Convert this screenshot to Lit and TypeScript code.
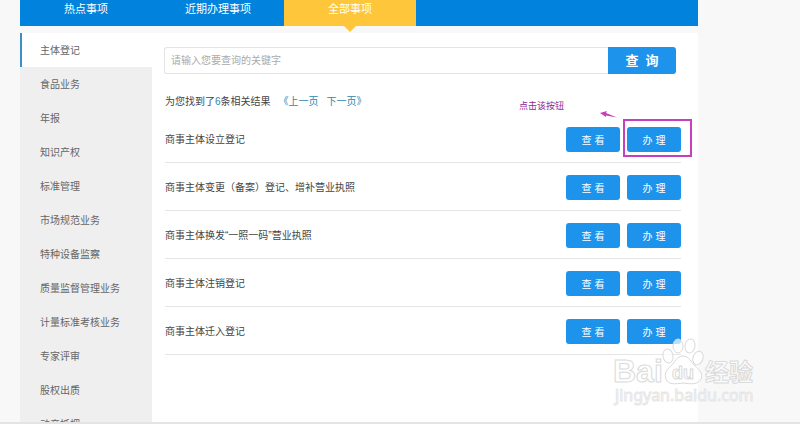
import { LitElement, html, css } from "lit";
import { customElement, state } from "lit/decorators.js";
import { classMap } from "lit/directives/class-map.js";

const TABS = ["热点事项", "近期办理事项", "全部事项"];
const CATEGORIES = [
  "主体登记", "食品业务", "年报", "知识产权", "标准管理", "市场规范业务",
  "特种设备监察", "质量监督管理业务", "计量标准考核业务", "专家评审", "股权出质", "动产抵押",
];
const RESULTS = [
  "商事主体设立登记",
  "商事主体变更（备案）登记、增补营业执照",
  "商事主体换发“一照一码”营业执照",
  "商事主体注销登记",
  "商事主体迁入登记",
];

@customElement("app-root")
export class AppRoot extends LitElement {
  @state() private tab = 2;
  @state() private category = 0;

  static styles = css`
    :host {
      display: flex;
      flex-direction: column;
      position: relative;
      height: 100vh;
      overflow: hidden;
      background: #f8f8f8;
      color: #444;
      font: 10px/16px "Liberation Sans", "Noto Sans CJK SC", sans-serif;
    }
    * { box-sizing: border-box; }
    button, input { font: inherit; margin: 0; border: 0; }
    button { cursor: pointer; padding: 0; }
    a { color: #2d86ad; text-decoration: none; }
    .page {
      flex: 1;
      min-height: 0;
      display: flex;
      flex-direction: column;
      gap: 7px;
      margin: 0 102px 0 20px;
    }
    .tabs { flex: none; display: flex; height: 26px; background: #0082dd; }
    .tab {
      position: relative;
      width: 132px;
      padding-bottom: 8px;
      background: none;
      color: #fff;
      font-size: 11px;
    }
    .tab.active { background: #fec63a; }
    .tab.active::after {
      content: "";
      position: absolute;
      top: 100%;
      left: 50%;
      margin-left: -6px;
      border: 6px solid transparent;
      border-top-color: #fec63a;
      border-bottom: 0;
    }
    .body { flex: 1; min-height: 0; display: flex; background: #fff; }
    .side { flex: none; width: 132px; background: #efefef; overflow: hidden; }
    .cat {
      display: block;
      width: 100%;
      height: 34px;
      padding: 2px 0 0 20px;
      background: none;
      color: #666;
      text-align: left;
    }
    .cat.active { background: #fff; border-left: 2px solid #3a8fc8; padding-left: 18px; }
    .main { flex: 1; min-width: 0; padding: 14px 17px 0 13px; }
    .search { display: flex; height: 27px; margin: 0 5px 0 -1px; }
    .search input {
      flex: 1;
      min-width: 0;
      padding: 0 6px;
      border: 1px solid #e4e4e4;
      border-right: 0;
      border-radius: 3px 0 0 3px;
      background: #fff;
      outline: none;
    }
    .search input::placeholder { color: #aaa; opacity: 1; }
    .search button {
      width: 68px;
      border-radius: 0 3px 3px 0;
      background: #1e93ec;
      color: #fff;
      font-size: 13px;
      font-weight: 700;
      white-space: pre;
    }
    .summary { display: flex; gap: 8px; margin: 20px 0 5px; }
    .count { color: #2d86ad; }
    .results { margin: 0; padding: 0; list-style: none; }
    .row {
      display: flex;
      align-items: center;
      gap: 7px;
      height: 48px;
      padding-top: 2px;
      border-bottom: 1px solid #e6e6e6;
    }
    .name { flex: 1; }
    .act {
      width: 54px;
      height: 25px;
      padding-top: 2px;
      border-radius: 3px;
      background: #1e93ec;
      color: #fff;
    }
    .target { position: relative; display: flex; }
    .frame {
      position: absolute;
      inset: -8px -11px -5px -4px;
      border: 2px solid #c53fc0;
      pointer-events: none;
    }
    .arrow { position: absolute; left: -28px; top: -16px; }
    .note {
      position: absolute;
      right: 117px;
      bottom: 39px;
      color: #8b2a92;
      font-size: 9px;
      line-height: 14px;
      white-space: nowrap;
    }
    .mark { position: absolute; right: 40px; bottom: 14px; pointer-events: none; }
    .outline { fill: #fff; fill-opacity: 0.7; stroke: #dadada; stroke-width: 1; }
    .word { font-family: "Liberation Sans", "Noto Sans CJK SC", sans-serif; font-weight: 700; }
    .url { font-family: "Noto Sans", sans-serif; stroke: #e6e6e6; }
    .foot { flex: none; height: 2px; background: #e4e4e4; }
  `;

  private annotation() {
    return html`
      <span class="frame"></span>
      <svg class="arrow" width="20" height="8" viewBox="0 0 20 8" aria-hidden="true">
        <path d="M1 2 8 0 7 2 18 6.500 7 4.500 7 6Z" fill="#c93bc0" />
      </svg>
      <span class="note">点击该按钮</span>
    `;
  }

  render() {
    return html`
      <div class="page">
        <nav class="tabs">
          ${TABS.map((t, i) => html`
            <button class=${classMap({ tab: true, active: i === this.tab })}
              @click=${() => (this.tab = i)}>${t}</button>`)}
        </nav>
        <div class="body">
          <nav class="side">
            ${CATEGORIES.map((c, i) => html`
              <button class=${classMap({ cat: true, active: i === this.category })}
                @click=${() => (this.category = i)}>${c}</button>`)}
          </nav>
          <main class="main">
            <form class="search" @submit=${(e: Event) => e.preventDefault()}>
              <input type="text" aria-label="关键字" placeholder="请输入您要查询的关键字" />
              <button type="submit">查  询</button>
            </form>
            <div class="summary">
              <span>为您找到了<span class="count">6</span>条相关结果</span>
              <a href="#prev">《上一页</a>
              <a href="#next">下一页》</a>
            </div>
            <ul class="results">
              ${RESULTS.map((r, i) => html`
                <li class="row">
                  <span class="name">${r}</span>
                  <button class="act">查 看</button>
                  <span class="target">
                    <button class="act">办 理</button>
                    ${i === 0 ? this.annotation() : ""}
                  </span>
                </li>`)}
            </ul>
          </main>
        </div>
      </div>
      <div class="foot"></div>
      <svg class="mark" width="150" height="74" viewBox="0 0 150 74" aria-hidden="true">
        <text class="outline word" x="3" y="46" font-size="32">Bai</text>
        <g class="outline">
          <ellipse cx="58" cy="20" rx="5" ry="7" transform="rotate(-12 58 20)" />
          <ellipse cx="68" cy="10" rx="5" ry="7" />
          <ellipse cx="80" cy="10" rx="5" ry="7" transform="rotate(10 80 10)" />
          <ellipse cx="88" cy="22" rx="5" ry="7" transform="rotate(20 88 22)" />
          <path d="M73 20C67 20 65 26 61 30C56 34 54 38 56 43C58 49 65 48 73 47C81 48 88 49 91 43C93 38 90 34 85 30C81 26 79 20 73 20Z" />
        </g>
        <text class="outline word" x="62" y="43" font-size="18">du</text>
        <text class="outline word" x="95" y="45" font-size="24">经验</text>
        <text class="outline url" x="5" y="65" font-size="16">jingyan.baidu.com</text>
      </svg>
    `;
  }
}
